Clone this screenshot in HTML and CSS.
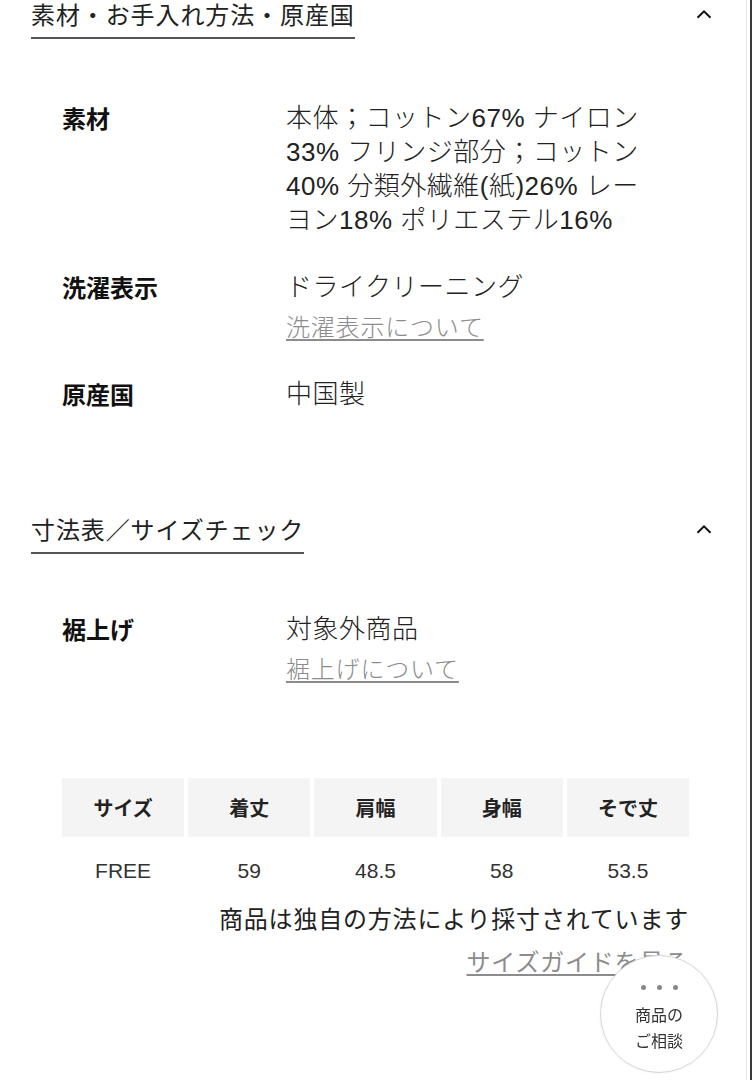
FILE: index.html
```html
<!DOCTYPE html>
<html lang="ja">
<head>
<meta charset="utf-8">
<title>素材・寸法</title>
<link rel="stylesheet" href="styles.css">
</head>
<body>
<div class="page">
  <section class="sec sec-first">
    <div class="sec-head">
      <h2 class="sec-title">素材・お手入れ方法・原産国</h2>
      <svg class="chev" width="16" height="10" viewBox="0 0 16 10"><polyline points="1.5,8.8 8,2.3 14.5,8.8" fill="none" stroke="#111" stroke-width="2"/></svg>
    </div>
    <div class="sec-body body-first">
      <div class="spec">
        <div class="spec-label">素材</div>
        <div class="spec-value">本体；コットン67% ナイロン<br>33% フリンジ部分；コットン<br>40% 分類外繊維(紙)26% レー<br>ヨン18% ポリエステル16%</div>
        <div class="spec-label">洗濯表示</div>
        <div class="spec-value">ドライクリーニング<br><a class="spec-link" href="#">洗濯表示について</a></div>
        <div class="spec-label">原産国</div>
        <div class="spec-value">中国製</div>
      </div>
    </div>
  </section>

  <section class="sec sec-second">
    <div class="sec-head">
      <h2 class="sec-title">寸法表／サイズチェック</h2>
      <svg class="chev" width="16" height="10" viewBox="0 0 16 10"><polyline points="1.5,8.8 8,2.3 14.5,8.8" fill="none" stroke="#111" stroke-width="2"/></svg>
    </div>
    <div class="sec-body body-second">
      <div class="spec">
        <div class="spec-label">裾上げ</div>
        <div class="spec-value">対象外商品<br><a class="spec-link" href="#">裾上げについて</a></div>
      </div>
      <div class="size-table">
        <div class="th">サイズ</div>
        <div class="th">着丈</div>
        <div class="th">肩幅</div>
        <div class="th">身幅</div>
        <div class="th">そで丈</div>
        <div class="td">FREE</div>
        <div class="td">59</div>
        <div class="td">48.5</div>
        <div class="td">58</div>
        <div class="td">53.5</div>
      </div>
      <p class="size-note">商品は独自の方法により採寸されています</p>
      <p class="size-guide"><a class="guide-link" href="#">サイズガイドを見る</a></p>
    </div>
  </section>
</div>

<a class="consult" href="#">
  <span class="dots"><i></i><i></i><i></i></span>
  <span class="consult-text">商品の<br>ご相談</span>
</a>
</body>
</html>
```

FILE: styles.css
```css
html {
  background: linear-gradient(to right, #ffffff 0, #ffffff 750px, #3a3a3a 750px);
  min-height: 100%;
}
body {
  margin: 0;
  font-family: "Noto Sans CJK JP", "Noto Sans", sans-serif;
  color: #222;
}
.page {
  width: 746px;
  min-height: 1080px;
  background: #fff;
  border-right: 1px solid #e6e6e6;
}
.sec-head {
  display: flex;
  justify-content: space-between;
  align-items: flex-start;
  padding: 0 34px 0 31px;
}
.sec-title {
  margin: 0;
  font-size: 24px;
  font-weight: 400;
  line-height: 28px;
  letter-spacing: 0.9px;
  color: #222;
  padding-bottom: 9px;
  border-bottom: 2px solid #555;
}
.chev {
  display: block;
  margin-top: 9px;
}
.sec-second {
  margin-top: 104px;
}
.sec-body {
  padding-left: 62px;
}
.body-first {
  padding-top: 62px;
}
.body-second {
  padding-top: 58px;
}
.spec {
  display: grid;
  grid-template-columns: 224px 1fr;
  row-gap: 33px;
}
.spec-label {
  font-size: 24px;
  font-weight: 700;
  line-height: 34px;
  color: #111;
}
.spec-value {
  font-family: "Liberation Sans", "Noto Sans CJK JP", sans-serif;
  font-size: 26px;
  font-weight: 300;
  line-height: 34px;
  letter-spacing: 0.5px;
  color: #222;
  white-space: nowrap;
}
.spec-link {
  display: inline-block;
  margin-top: 5px;
  font-family: "Noto Sans CJK JP", sans-serif;
  font-size: 24px;
  letter-spacing: 0.8px;
  color: #8c8c8c;
  text-decoration: underline;
  text-underline-offset: 3px;
  text-decoration-thickness: 1.5px;
}
.size-table {
  margin-top: 92px;
  width: 627px;
  display: grid;
  grid-template-columns: repeat(5, 1fr);
  column-gap: 4px;
  row-gap: 4px;
}
.th {
  height: 59px;
  background: #f4f4f4;
  display: flex;
  align-items: center;
  justify-content: center;
  font-size: 20px;
  font-weight: 700;
  color: #222;
}
.td {
  height: 60px;
  display: flex;
  align-items: center;
  justify-content: center;
  font-family: "Liberation Sans", "Noto Sans CJK JP", sans-serif;
  font-size: 21px;
  color: #333;
}
.size-note {
  margin: 2px 0 0;
  width: 627px;
  text-align: right;
  font-size: 24px;
  letter-spacing: 0.8px;
  line-height: 30px;
  color: #222;
}
.size-guide {
  margin: 13px 0 0;
  width: 627px;
  text-align: right;
  font-size: 24px;
  letter-spacing: 0.8px;
  line-height: 30px;
}
.guide-link {
  color: #8c8c8c;
  text-decoration: underline;
  text-underline-offset: 3px;
  text-decoration-thickness: 1.5px;
}
.consult {
  position: fixed;
  left: 600px;
  top: 955px;
  width: 118px;
  height: 118px;
  box-sizing: border-box;
  border: 1.5px solid #d6d6d6;
  border-radius: 50%;
  background: #fff;
  box-shadow: 0 0 3px rgba(0, 0, 0, 0.06);
  display: flex;
  flex-direction: column;
  align-items: center;
  padding-top: 29px;
  text-decoration: none;
  color: #333;
}
.dots {
  display: flex;
  gap: 11px;
}
.dots i {
  display: block;
  width: 5px;
  height: 5px;
  border-radius: 50%;
  background: #888;
}
.consult-text {
  margin-top: 11px;
  font-size: 16px;
  line-height: 26px;
  text-align: center;
  color: #333;
}
```
